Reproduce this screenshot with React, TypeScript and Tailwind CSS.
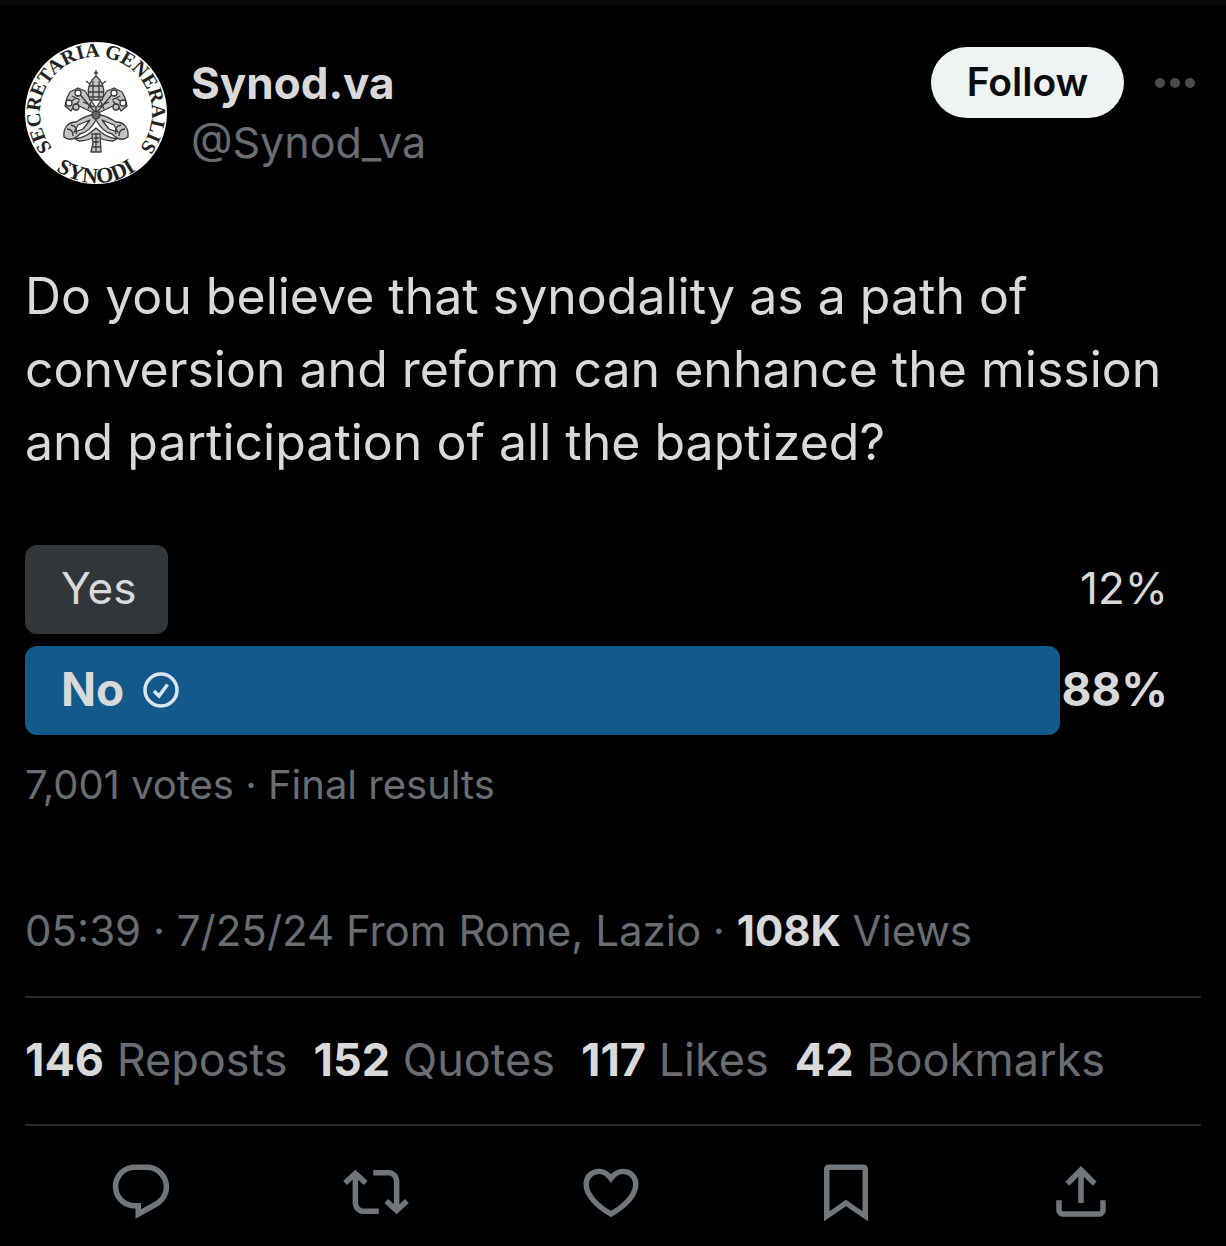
import type { ReactNode } from "react";

interface PollOption {
  id: string;
  label: string;
  percent: number;
  fill: number;
  winner: boolean;
}

const POLL: PollOption[] = [
  { id: "yes", label: "Yes", percent: 12, fill: 12.16, winner: false },
  { id: "no", label: "No", percent: 88, fill: 88, winner: true },
];

const STATS = [
  { value: "146", label: "Reposts" },
  { value: "152", label: "Quotes" },
  { value: "117", label: "Likes" },
  { value: "42", label: "Bookmarks" },
];

const ACTIONS: { label: string; icon: ReactNode }[] = [
  {
    label: "Reply",
    icon: (
      <path d="M1.751 10c0-4.42 3.584-8 8.005-8h4.366c4.49 0 8.129 3.64 8.129 8.13 0 2.96-1.607 5.68-4.196 7.11l-8.054 4.46v-3.69h-.067c-4.49.1-8.183-3.51-8.183-8.01zm8.005-6c-3.317 0-6.005 2.69-6.005 6 0 3.37 2.77 6.08 6.138 6.01l.351-.01h1.761v2.3l5.087-2.81c1.951-1.08 3.163-3.13 3.163-5.36 0-3.39-2.744-6.13-6.129-6.13H9.756z" />
    ),
  },
  {
    label: "Repost",
    icon: (
      <path d="M4.5 3.88l4.432 4.14-1.364 1.46L5.5 7.55V16c0 1.1.896 2 2 2H13v2H7.5c-2.209 0-4-1.79-4-4V7.55L1.432 9.48.068 8.02 4.5 3.88zM16.5 6H11V4h5.5c2.209 0 4 1.79 4 4v8.45l2.068-1.93 1.364 1.46-4.432 4.14-4.432-4.14 1.364-1.46 2.068 1.93V8c0-1.1-.896-2-2-2z" />
    ),
  },
  {
    label: "Like",
    icon: (
      <path d="M16.697 5.5c-1.222-.06-2.679.51-3.89 2.16l-.805 1.09-.806-1.09C9.984 6.01 8.526 5.44 7.304 5.5c-1.243.07-2.349.78-2.91 1.91-.552 1.12-.633 2.78.479 4.82 1.074 1.97 3.257 4.27 7.129 6.61 3.87-2.34 6.052-4.64 7.126-6.61 1.111-2.04 1.03-3.7.477-4.82-.561-1.13-1.666-1.84-2.908-1.91zm4.187 7.69c-1.351 2.48-4.001 5.12-8.379 7.67l-.503.3-.504-.3c-4.379-2.55-7.029-5.19-8.382-7.67-1.36-2.5-1.41-4.86-.514-6.67.887-1.79 2.647-2.91 4.601-3.01 1.651-.09 3.368.56 4.798 2.01 1.429-1.45 3.146-2.1 4.796-2.01 1.954.1 3.714 1.22 4.601 3.01.896 1.81.846 4.17-.514 6.67z" />
    ),
  },
  {
    label: "Bookmark",
    icon: (
      <path
        fillRule="evenodd"
        d="M4 3.6C4 2.7 4.7 2 5.6 2h12.8c.9 0 1.6.7 1.6 1.6v19l-8-5.4-8 5.4V3.6zM6 4v15l6-4.2 6 4.200V4H6z"
      />
    ),
  },
  {
    label: "Share",
    icon: (
      <path d="M12 2.59l5.7 5.7-1.41 1.42L13 6.41V16h-2V6.41l-3.3 3.3-1.41-1.42L12 2.59zM21 15l-.02 3.51c0 1.38-1.12 2.49-2.5 2.49H5.5C4.11 21 3 19.88 3 18.5V15h2v3.5c0 .28.22.5.5.5h12.98c.28 0 .5-.22.5-.5L19 15h2z" />
    ),
  },
];

export default function App() {
  return (
    <article className="border-t-[5px] border-[#090909] bg-black px-[25px] pb-[22px] font-['Inter','Liberation_Sans',sans-serif] text-[#d9d9d9]">
      <header className="flex items-start pt-[37px] pr-[5px]">
        <SynodAvatar />
        <div className="ml-6 flex-1 pt-3">
          <h1 className="text-[44px] leading-[58px] font-bold">Synod.va</h1>
          <p className="text-[43px] leading-[60px] text-[#6a6d70]">@Synod_va</p>
        </div>
        <button
          type="button"
          className="mt-[5px] h-[71px] w-[193px] rounded-full bg-[#eff3f4] text-[39px] font-semibold text-[#0a0c0e]"
        >
          Follow
        </button>
        <button type="button" aria-label="More" className="mt-[34px] ml-[30px]">
          <svg viewBox="0 0 42 14" className="h-[14px] w-[42px] fill-[#4b4b4d]">
            <circle cx="6" cy="7" r="5" />
            <circle cx="21" cy="7" r="5" />
            <circle cx="36" cy="7" r="5" />
          </svg>
        </button>
      </header>

      <p className="mt-[76px] text-[50px] leading-[73px]">
        Do you believe that synodality as a path of conversion and reform can
        enhance the mission and participation of all the baptized?
      </p>

      <ul className="mt-[66px] space-y-3">
        {POLL.map((option) => (
          <PollRow key={option.id} option={option} />
        ))}
      </ul>

      <p className="mt-5 text-[40px] leading-[60px] text-[#6a6d70]">
        7,001 votes · Final results
      </p>

      <p className="mt-[86px] text-[42px] leading-[60px] text-[#6a6d70]">
        05:39 · 7/25/24 From Rome, Lazio ·{" "}
        <strong className="font-bold text-[#d9d9d9]">108K</strong> Views
      </p>

      <ul className="mt-[35px] flex gap-x-[26px] border-y-2 border-[#242628] pt-8 pb-[34px] text-[45px] leading-[60px]">
        {STATS.map((stat) => (
          <li key={stat.label} className="whitespace-nowrap text-[#6a6d70]">
            <strong className="font-bold text-[#d9d9d9]">{stat.value}</strong>{" "}
            {stat.label}
          </li>
        ))}
      </ul>

      <div className="mt-[33px] -ml-px grid grid-cols-5 pr-[3px]">
        {ACTIONS.map((action) => (
          <button
            key={action.label}
            type="button"
            aria-label={action.label}
            className="flex justify-center"
          >
            <svg viewBox="0 0 24 24" className="size-[66px] fill-[#71767b]">
              {action.icon}
            </svg>
          </button>
        ))}
      </div>
    </article>
  );
}

function PollRow({ option }: { option: PollOption }) {
  return (
    <li
      className={`grid leading-[60px] ${option.winner ? "text-[46px] font-bold" : "text-[44px]"}`}
    >
      <div
        className={`col-start-1 row-start-1 h-[89px] rounded-xl ${option.winner ? "bg-[#135a8c]" : "bg-[#333639]"}`}
        style={{ width: `${option.fill}%` }}
      />
      <div className="col-start-1 row-start-1 flex items-center justify-between pr-[33px] pb-1 pl-9">
        <span className="flex items-center gap-[18px]">
          {option.label}
          {option.winner && <WinnerCheck />}
        </span>
        <span>{option.percent}%</span>
      </div>
    </li>
  );
}

function WinnerCheck() {
  return (
    <svg
      viewBox="0 0 38 38"
      className="size-[38px] fill-none stroke-[#d9e6f0]"
      aria-hidden="true"
    >
      <circle cx="19" cy="20" r="16" strokeWidth="3.500" />
      <path d="M12 21l5 5 8.500-11.500" strokeWidth="3.500" />
    </svg>
  );
}

// Round seal: lettering on two arcs around the tiara and crossed keys
function SynodAvatar() {
  return (
    <svg
      viewBox="0 0 142 142"
      className="size-[142px] overflow-visible"
      role="img"
      aria-label="Synod.va"
    >
      <defs>
        <path id="seal-top" d="M71 127a56 56 0 1 1 .01 0" />
        <path id="seal-bottom" d="M1 71a70 70 0 0 0 140 0" />
      </defs>
      <circle cx="71" cy="71" r="71" fill="#fff" />
      <g
        fill="#222"
        fontFamily="'Liberation Serif', serif"
        fontWeight="bold"
        textAnchor="middle"
      >
        <text fontSize="20">
          <textPath href="#seal-top" startOffset="50%">
            SECRETARIA GENERALIS
          </textPath>
        </text>
        <text fontSize="22">
          <textPath href="#seal-bottom" startOffset="50%">
            SYNODI
          </textPath>
        </text>
      </g>
      <g fill="#c4c4c4" stroke="#3a3a3a" strokeWidth="1.300" strokeLinejoin="round">
        {/* keys */}
        <path d="M45 50l8-4 7 3 11 17 0 6-21-10-4 7-6-5 2-8z" />
        <path d="M97 50l-8-4-7 3-11 17 0 6 21-10 4 7 6-5-2-8z" />
        <path
          d="M47 54l8 4M42 62l9-6M95 54l-8 4M100 62l-9-6M52 49l17 20M90 49L73 69M49 66l5-7M93 66l-5-7M58 60l11 5M84 60l-11 5"
          fill="none"
        />
        <circle cx="44" cy="61" r="3" fill="#fff" />
        <circle cx="98" cy="61" r="3" fill="#fff" />
        <circle cx="53" cy="51" r="3" fill="#fff" />
        <circle cx="89" cy="51" r="3" fill="#fff" />
        <circle cx="51" cy="65" r="3" />
        <circle cx="91" cy="65" r="3" />
        {/* bows and ribbons */}
        <path d="M71 72c-8 1-14 4-20 8-8 0-13 6-12 15 5 4 11 2 16-3 7-1 12-7 16-14z" />
        <path d="M71 72c8 1 14 4 20 8 8 0 13 6 12 15-5 4-11 2-16-3-7-1-12-7-16-14z" />
        <path d="M53 83l12-5-7 9-9 3zM89 83l-12-5 7 9 9 3z" fill="#fff" />
        <path
          d="M42 87c4 0 6 3 6 7M46 83c5 1 7 5 5 9M100 87c-4 0-6 3-6 7M96 83c-5 1-7 5-5 9"
          fill="none"
        />
        <path d="M50 97c8-1 14-4 21-11 7 7 13 10 21 11l-4 2c-7 0-12-2-17-5-5 3-10 5-17 5z" />
        <path d="M67 92h8l1 18H66l2-9z" />
        <path d="M69 96h5M68 100h6M68 105h7M71 92v17" />
        {/* tiara */}
        <path d="M65 58c-3-7-2-14 2-20l4-4 4 4c4 6 5 13 2 20z" />
        <path
          d="M64 44h14M63 50h16M64 55h14M71 28v7M69 31h4M68 39v18M74 39v18M61 39l4 3M81 39l-4 3"
          fill="none"
        />
        <path d="M66 60l-3 7M76 60l3 7" />
        <circle cx="71" cy="73" r="4" fill="#666" />
      </g>
    </svg>
  );
}
